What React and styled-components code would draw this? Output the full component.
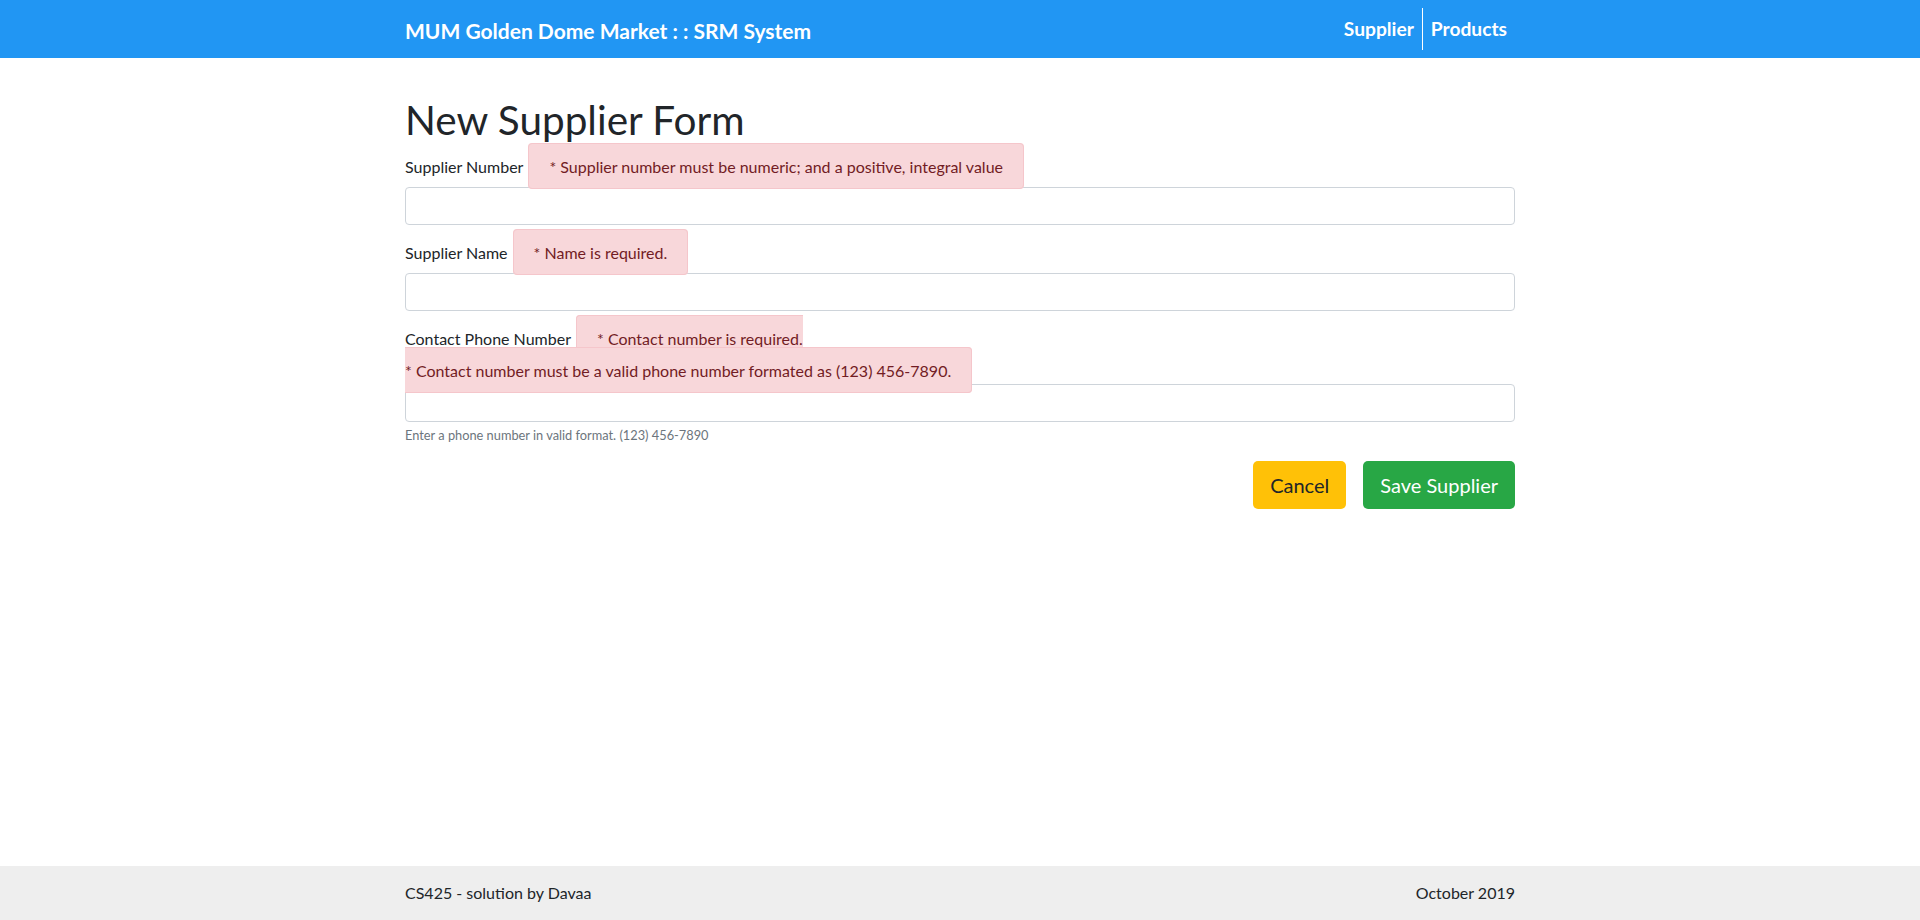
import React from 'react'
import styled, { createGlobalStyle } from 'styled-components'

const GlobalStyle = createGlobalStyle`
    * {
        box-sizing: border-box;
    }
    html, body {
        margin: 0;
        padding: 0;
    }
    body {
        font-family: Lato, "Liberation Sans", sans-serif;
        font-size: 16px;
        color: #212529;
        background: #fff;
    }
`;

const Page = styled.div`
    display: flex;
    flex-direction: column;
    min-height: 100vh;
`;

const Container = styled.div`
    width: 1140px;
    margin: 0 auto;
    padding: 0 15px;
`;

const NavBar = styled.nav`
    background-color: #2196f3;
    height: 58px;
`;

const NavInner = styled(Container)`
    display: flex;
    align-items: center;
    justify-content: space-between;
    height: 100%;
`;

const Brand = styled.a`
    color: #fff;
    font-weight: 700;
    font-size: 21px;
    line-height: 30px;
    padding-top: 3px;
    text-decoration: none;
`;

const NavLinks = styled.div`
    display: flex;
    align-items: center;
`;

const NavLink = styled.a`
    color: #fff;
    font-weight: 700;
    font-size: 19.2px;
    line-height: 26px;
    padding: 8px;
    text-decoration: none;
    border-left: ${({ divided }) => divided ? '1px solid #fff' : 'none'};
`;

const Main = styled.main`
    flex: 1;
    padding-top: 38px;
`;

const Heading = styled.h1`
    font-size: 40.5px;
    font-weight: 400;
    line-height: 1.2;
    margin: 0 0 10px;
`;

const FieldGroup = styled.div`
    margin-bottom: ${({ $mb }) => $mb}px;
`;

const LabelLine = styled.div`
    line-height: ${({ $lh }) => $lh}px;
    margin-bottom: ${({ $mb }) => $mb}px;
`;

const Label = styled.label`
    margin-right: 5px;
`;

const ErrorTag = styled.span`
    position: relative;
    padding: 13px 20px 12px;
    color: #721c24;
    background-color: #f8d7da;
    border: 1px solid #f5c6cb;
    border-radius: 4px;
`;

const Input = styled.input`
    display: block;
    width: 100%;
    height: 38px;
    padding: 6px 12px;
    font-size: 16px;
    font-family: inherit;
    border: 1px solid #ced4da;
    border-radius: 4px;
    background: #fff;
`;

const HelpText = styled.small`
    display: block;
    margin-top: 4px;
    font-size: 12.8px;
    line-height: 19.2px;
    color: #6c757d;
`;

const Actions = styled.div`
    display: flex;
    justify-content: flex-end;
    gap: 17px;
    margin-top: 16px;
`;

const Button = styled.button`
    height: 48px;
    padding: 0 17px;
    font-family: inherit;
    font-size: 20px;
    border: 0;
    border-radius: 5px;
    cursor: pointer;
    background-color: ${({ variant }) => variant === 'success' ? '#28a745' : '#ffc107'};
    color: ${({ variant }) => variant === 'success' ? '#fff' : '#212529'};
`;

const Footer = styled.footer`
    background-color: #eeeeee;
    height: 54px;
`;

const FooterInner = styled(Container)`
    display: flex;
    align-items: center;
    justify-content: space-between;
    height: 100%;
    font-size: 16px;
    line-height: 24px;
`;

export default function App() {
    return (
        <Page>
            <GlobalStyle />
            <NavBar>
                <NavInner>
                    <Brand href="#">MUM Golden Dome Market : : SRM System</Brand>
                    <NavLinks>
                        <NavLink href="#">Supplier</NavLink>
                        <NavLink href="#" divided>Products</NavLink>
                    </NavLinks>
                </NavInner>
            </NavBar>

            <Main>
                <Container>
                    <Heading>New Supplier Form</Heading>

                    <FieldGroup $mb={16}>
                        <LabelLine $lh={24} $mb={8}>
                            <Label>Supplier Number</Label>
                            <ErrorTag>* Supplier number must be numeric; and a positive, integral value</ErrorTag>
                        </LabelLine>
                        <Input type="text" />
                    </FieldGroup>

                    <FieldGroup $mb={12}>
                        <LabelLine $lh={24} $mb={8}>
                            <Label>Supplier Name</Label>
                            <ErrorTag>* Name is required.</ErrorTag>
                        </LabelLine>
                        <Input type="text" />
                    </FieldGroup>

                    <FieldGroup $mb={0}>
                        <LabelLine $lh={32} $mb={-3}>
                            <Label>Contact Phone Number</Label>
                            <ErrorTag>
                                * Contact number is required.
                                <br />
                                * Contact number must be a valid phone number formated as (123) 456-7890.
                            </ErrorTag>
                        </LabelLine>
                        <Input type="text" />
                        <HelpText>Enter a phone number in valid format. (123) 456-7890</HelpText>
                    </FieldGroup>

                    <Actions>
                        <Button variant="warning">Cancel</Button>
                        <Button variant="success">Save Supplier</Button>
                    </Actions>
                </Container>
            </Main>

            <Footer>
                <FooterInner>
                    <span>CS425 - solution by Davaa</span>
                    <span>October 2019</span>
                </FooterInner>
            </Footer>
        </Page>
    )
}
